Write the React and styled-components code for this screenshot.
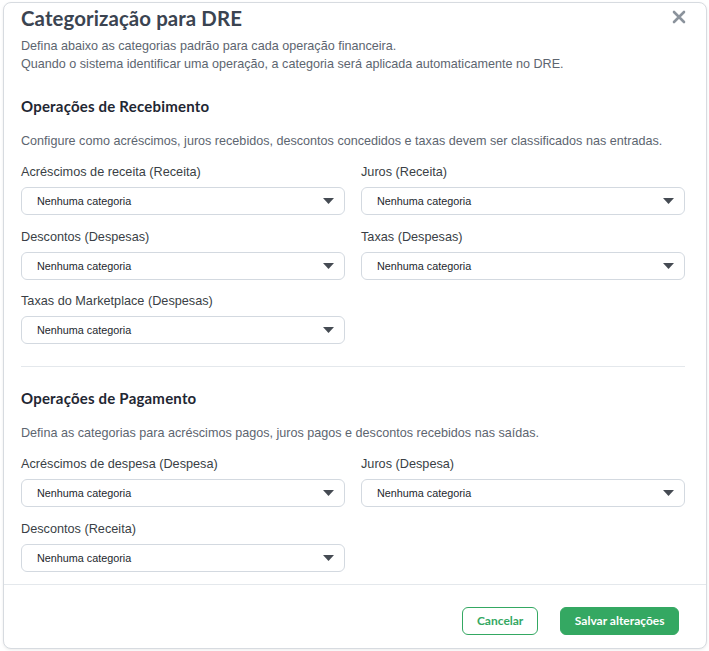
import React from "react";
import styled, { createGlobalStyle } from "styled-components";

const GlobalStyle = createGlobalStyle`
  * { box-sizing: border-box; }
  html, body { margin: 0; padding: 0; background: #ffffff; }
  body { font-family: "Liberation Sans", Arial, sans-serif; }
`;

const Modal = styled.div`
  margin: 2px 2px 2px 3px;
  height: 647px;
  border: 1px solid #d7dbe0;
  border-radius: 8px;
  background: #ffffff;
  box-shadow: 0 1px 3px rgba(0, 0, 0, 0.08);
  display: flex;
  flex-direction: column;
  overflow: hidden;
`;

const Header = styled.header`
  padding: 3px 21px 0 17px;
`;

const TitleRow = styled.div`
  display: flex;
  align-items: center;
  justify-content: space-between;
`;

const Title = styled.h2`
  margin: 0;
  font-family: "Lato", "Noto Sans", sans-serif;
  font-weight: 700;
  font-size: 20.4px;
  line-height: 24px;
  color: #3b4451;
  letter-spacing: 0.1px;
`;

const CloseButton = styled.button`
  border: none;
  background: none;
  padding: 0;
  margin: 0 -2px 3px 0;
  width: 16px;
  height: 16px;
  display: flex;
  align-items: center;
  justify-content: center;
  cursor: pointer;
`;

const Intro = styled.p`
  margin: 7px 0 0;
  font-size: 12.6px;
  line-height: 18px;
  color: #5d6570;
`;

const Body = styled.div`
  padding: 0 21px 12px 17px;
  border-bottom: 1px solid #e4e8ec;
`;

const Section = styled.section`
  padding-top: ${(p) => p.$top}px;
  padding-bottom: ${(p) => p.$bottom}px;
  border-bottom: ${(p) => (p.$divider ? "1px solid #e4e8ec" : "none")};
`;

const SectionTitle = styled.h3`
  margin: 0;
  font-family: "Lato", "Noto Sans", sans-serif;
  font-weight: 700;
  font-size: 15px;
  line-height: 20px;
  letter-spacing: 0.2px;
  color: #1f2733;
`;

const SectionText = styled.p`
  margin: 16px 0 14px;
  font-size: 12.6px;
  line-height: 18px;
  color: #5d6570;
`;

const FieldGrid = styled.div`
  display: grid;
  grid-template-columns: 1fr 1fr;
  column-gap: 16px;
  row-gap: 13.5px;
`;

const Field = styled.label`
  display: flex;
  flex-direction: column;
  gap: 7px;
`;

const FieldLabel = styled.span`
  font-size: 12.7px;
  line-height: 16px;
  color: #3a3f46;
`;

const SelectBox = styled.div`
  height: 28px;
  border: 1px solid #d3d9e0;
  border-radius: 6px;
  background: #ffffff;
  padding: 0 10px 0 15px;
  display: flex;
  align-items: center;
  justify-content: space-between;
  font-size: 10.8px;
  color: #23272d;
  cursor: pointer;
`;

const Caret = styled.svg`
  width: 11px;
  height: 6px;
  flex: none;
`;

const Footer = styled.footer`
  flex: 1;
  display: flex;
  justify-content: flex-end;
  align-items: flex-start;
  gap: 22px;
  padding: 22px 27px 0 0;
`;

const Button = styled.button`
  height: 28px;
  padding: 0 ${(p) => (p.$primary ? 13.5 : 14)}px;
  border-radius: 6px;
  border: 1px solid #34a862;
  background: ${(p) => (p.$primary ? "#34a862" : "#ffffff")};
  color: ${(p) => (p.$primary ? "#ffffff" : "#34a862")};
  font-family: "Lato", "Noto Sans", sans-serif;
  font-weight: 700;
  font-size: 12px;
  cursor: pointer;
`;

function Select({ label }) {
  return (
    <Field>
      <FieldLabel>{label}</FieldLabel>
      <SelectBox>
        <span>Nenhuma categoria</span>
        <Caret viewBox="0 0 11 6">
          <path d="M0 0 H11 L5.5 6 Z" fill="#454b53" />
        </Caret>
      </SelectBox>
    </Field>
  );
}

const receiving = [
  "Acréscimos de receita (Receita)",
  "Juros (Receita)",
  "Descontos (Despesas)",
  "Taxas (Despesas)",
  "Taxas do Marketplace (Despesas)",
];

const paying = [
  "Acréscimos de despesa (Despesa)",
  "Juros (Despesa)",
  "Descontos (Receita)",
];

export default function App() {
  return (
    <>
      <GlobalStyle />
      <Modal>
        <Header>
          <TitleRow>
            <Title>Categorização para DRE</Title>
            <CloseButton aria-label="Fechar">
              <svg width="14" height="14" viewBox="0 0 14 14">
                <path
                  d="M2 2 L12 12 M12 2 L2 12"
                  stroke="#8b939c"
                  strokeWidth="2.6"
                  strokeLinecap="round"
                />
              </svg>
            </CloseButton>
          </TitleRow>
          <Intro>
            Defina abaixo as categorias padrão para cada operação financeira.
            <br />
            Quando o sistema identificar uma operação, a categoria será aplicada
            automaticamente no DRE.
          </Intro>
        </Header>
        <Body>
          <Section $top={23} $bottom={22} $divider>
            <SectionTitle>Operações de Recebimento</SectionTitle>
            <SectionText>
              Configure como acréscimos, juros recebidos, descontos concedidos e
              taxas devem ser classificados nas entradas.
            </SectionText>
            <FieldGrid>
              {receiving.map((l) => (
                <Select key={l} label={l} />
              ))}
            </FieldGrid>
          </Section>
          <Section $top={21} $bottom={0}>
            <SectionTitle>Operações de Pagamento</SectionTitle>
            <SectionText>
              Defina as categorias para acréscimos pagos, juros pagos e descontos
              recebidos nas saídas.
            </SectionText>
            <FieldGrid>
              {paying.map((l) => (
                <Select key={l} label={l} />
              ))}
            </FieldGrid>
          </Section>
        </Body>
        <Footer>
          <Button>Cancelar</Button>
          <Button $primary>Salvar alterações</Button>
        </Footer>
      </Modal>
    </>
  );
}
